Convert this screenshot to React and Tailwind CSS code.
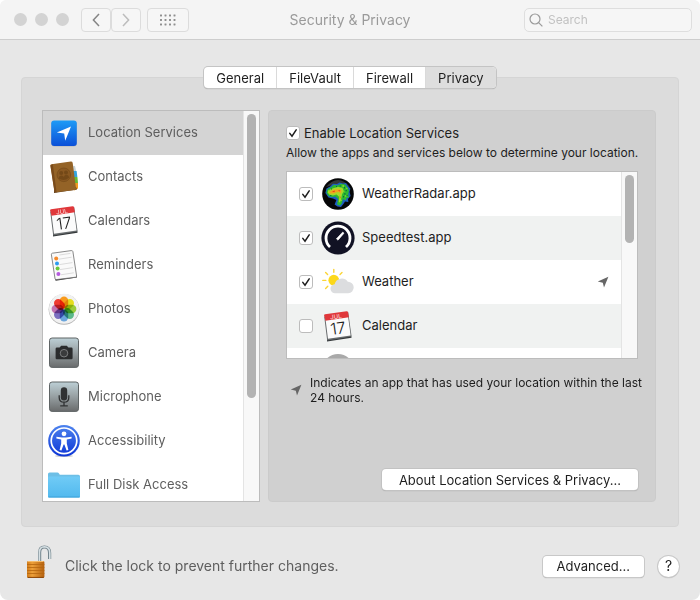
import React, { useState } from "react";

function LocationIcon() {
    return (
        <svg viewBox="0 0 32 32" className="size-8">
            <defs>
                <linearGradient id="loc" x1="0" y1="0" x2="0" y2="1">
                    <stop offset="0" stopColor="#1d9bf6" />
                    <stop offset="1" stopColor="#0b50d8" />
                </linearGradient>
            </defs>
            <rect x="3.4" y="4.2" width="25.4" height="25.4" rx="3" fill="#0002" />
            <rect x="3.2" y="3.5" width="25.6" height="25.4" rx="3" fill="url(#loc)" />
            <path d="M23 9.4 L17.2 23.8 L16.2 16.4 L8.8 15.6 Z" fill="#fff" />
        </svg>
    );
}

function ContactsIcon() {
    return (
        <svg viewBox="0 0 32 32" className="size-8">
            <path d="M23 4.5 L27 5 L28.2 10 L24 12 Z" fill="#c9d3d6" />
            <path d="M24 10 L28.6 10 L29.4 16 L25 17 Z" fill="#35a3dd" />
            <path d="M25 16 L29.4 16 L30 22 L26 23 Z" fill="#67b936" />
            <path d="M26 22 L30 22 L30 27.4 L26 29.5 Z" fill="#f09a21" />
            <path d="M6 32 L29 28.6 L28 26 L6 29 Z" fill="#5b3a17" />
            <path
                d="M2.4 4.4 Q2.3 3.5 3.4 3.3 L22.8 .6 Q24.4 .5 24.7 1.9 L28 27.4 Q28 28.7 27 28.9 L8.2 31.3 Q6.6 31.4 6.4 30.2 Z"
                fill="#946327"
            />
            <path d="M2.4 4.4 L4.8 3.2 L8.6 31.2 Q6.6 31.4 6.4 30.2 Z" fill="#7a4b1b" />
            <circle cx="15.8" cy="13.8" r="6.8" fill="#8a5922" stroke="#764a18" strokeWidth=".7" />
            <g fill="#744918">
                <circle cx="13.2" cy="12" r="2" />
                <circle cx="18" cy="11.4" r="2" />
                <path d="M10.5 17.6 Q11 14.4 13.6 14.4 Q15.4 14.4 15.8 16 Q16.4 13.8 18.6 13.8 Q20.8 14 21.2 16.4 Q16.4 20.8 10.5 17.6Z" />
            </g>
        </svg>
    );
}

function CalendarIcon() {
    return (
        <svg viewBox="0 0 32 32" className="size-8">
            <path d="M5 31.4 L29.6 27.8 L29 25 L5 28.5 Z" fill="#35393b" />
            <path d="M2.2 6.4 L26.2 2.2 L29.6 26.6 L5.2 30.4 Z" fill="#676b6d" />
            <path d="M3.4 8 L25.8 4.4 L28.6 25.4 L6 28.8 Z" fill="#fbfbfb" />
            <path d="M2.2 5.2 Q2.2 4.4 3 4.2 L24.6 1.2 Q25.8 1.2 26 2 L26.9 7.2 L3.4 10.8 Z" fill="#e0383b" />
            <g transform="rotate(-8 16 16)" fontFamily="Inter, sans-serif" textAnchor="middle">
                <text x="15.2" y="8.6" fontSize="6" fill="#ffe1e1">JUL</text>
                <text x="15.6" y="24" fontSize="16" fontWeight="300" fill="#222">17</text>
            </g>
        </svg>
    );
}

function RemindersIcon() {
    return (
        <svg viewBox="0 0 32 32" className="size-8">
            <path d="M7.6 31.7 L29 28.6 L28.6 26.6 L7 29 Z" fill="#333" />
            <path
                d="M3.4 5.6 Q3.3 4.4 4.4 4.2 L23.2 1.6 Q24.6 1.4 24.9 2.6 L28.6 27 Q28.6 28 27.6 28.2 L8.4 30.6 Q7.2 30.6 7 29.6 Z"
                fill="#fafafa"
                stroke="#6b6b6b"
                strokeWidth=".8"
            />
            <g stroke="#cfcfcf" strokeWidth=".7">
                <path d="M11.4 6 L22.4 4.4 M10.8 10.2 L23.6 8.2 M11.4 15.6 L24.4 13.6 M12 20.6 L25 18.6 M12.8 25.8 L25.8 23.8" />
            </g>
            <circle cx="8.2" cy="9.4" r="2" fill="#f58a2c" />
            <circle cx="9" cy="14.6" r="2" fill="#2d9cf0" />
            <circle cx="9.6" cy="19.6" r="2" fill="#6ac83c" />
            <circle cx="10.4" cy="25" r="2" fill="#b75be0" />
        </svg>
    );
}

const petals = ["#f89a1c", "#e5dd1e", "#9bcb3c", "#5cb98a", "#6aa5dc", "#7c6fc0", "#c273b0", "#ee3b30"];

function PhotosIcon() {
    return (
        <svg viewBox="0 0 32 32" className="size-8">
            <circle cx="16" cy="16.3" r="15.4" fill="#b5b5b5" />
            <circle cx="16" cy="15.8" r="15" fill="#f1f1f1" />
            <g style={{ isolation: "isolate" }}>
                {petals.map((color, i) => (
                    <rect
                        key={color}
                        x="11.8"
                        y="3.6"
                        width="8.4"
                        height="12"
                        rx="4.2"
                        fill={color}
                        transform={`rotate(${i * 45} 16 16)`}
                        style={{ mixBlendMode: "multiply" }}
                    />
                ))}
            </g>
        </svg>
    );
}

function MetalPlate({ id, children }) {
    return (
        <svg viewBox="0 0 32 32" className="size-8">
            <defs>
                <linearGradient id={id} x1="0" y1="0" x2="0" y2="1">
                    <stop offset="0" stopColor="#bdd0d6" />
                    <stop offset=".45" stopColor="#9ba4a7" />
                    <stop offset="1" stopColor="#696b6c" />
                </linearGradient>
            </defs>
            <rect x="1.5" y="1" width="29" height="29.4" rx="2.6" fill={`url(#${id})`} stroke="#5f6465" />
            {children}
        </svg>
    );
}

function CameraIcon() {
    return (
        <MetalPlate id="camera">
            <path
                d="M9 10.6 L11.6 10.6 L13.2 8.8 H18.8 L20.4 10.6 H23.4 Q24.6 10.6 24.6 11.8 V21 Q24.6 22.2 23.4 22.2 H8.8 Q7.6 22.2 7.6 21 V11.8 Q7.6 10.6 9 10.6Z"
                fill="#2b2c2d"
            />
            <circle cx="16" cy="16.2" r="3.8" fill="#3a3b3c" stroke="#8b8d8e" strokeWidth=".8" />
        </MetalPlate>
    );
}

function MicrophoneIcon() {
    return (
        <MetalPlate id="mic">
            <rect x="12.8" y="6.2" width="6.4" height="13.2" rx="3.2" fill="#303233" />
            <path
                d="M11.2 14.2 V16.4 Q11.2 21.2 16 21.2 Q20.8 21.2 20.8 16.4 V14.2 M16 21.2 V24.8 M12.2 24.8 H19.8"
                fill="none"
                stroke="#303233"
                strokeWidth="1.3"
            />
        </MetalPlate>
    );
}

function AccessibilityIcon() {
    return (
        <svg viewBox="0 0 32 32" className="size-8">
            <defs>
                <linearGradient id="access" x1="0" y1="0" x2="0" y2="1">
                    <stop offset="0" stopColor="#4d83ee" />
                    <stop offset="1" stopColor="#0d35d6" />
                </linearGradient>
            </defs>
            <ellipse cx="16" cy="31" rx="9" ry="1" fill="#0003" />
            <circle cx="16" cy="15.8" r="15.8" fill="url(#access)" />
            <circle cx="16" cy="15.8" r="12.8" fill="none" stroke="#fff" strokeWidth="1.7" />
            <circle cx="16" cy="8.8" r="2.4" fill="#fff" />
            <path
                d="M8.4 11.8 L14 12.4 H18 L23.6 11.8 V13.4 L18.8 14.6 V18.4 L20.4 25 L18.6 25.4 L16.4 19.4 H15.6 L13.4 25.4 L11.6 25 L13.2 18.4 V14.6 L8.4 13.4 Z"
                fill="#fff"
            />
        </svg>
    );
}

function FolderIcon() {
    return (
        <svg viewBox="0 0 32 32" className="size-8">
            <defs>
                <linearGradient id="folder" x1="0" y1="0" x2="0" y2="1">
                    <stop offset="0" stopColor="#70cbf6" />
                    <stop offset="1" stopColor="#52b9ee" />
                </linearGradient>
            </defs>
            <path d="M0 5 Q0 3.4 1.6 3.4 H9.4 Q10.4 3.4 11 4.4 L11.8 5.8 H30.4 Q32 5.8 32 7.4 V11 H0 Z" fill="#6dbfe6" />
            <rect y="7.4" width="32" height="21.2" rx="1.2" fill="url(#folder)" />
            <path d="M.6 28 H31.4" stroke="#3fa2d8" />
        </svg>
    );
}

function RadarIcon() {
    return (
        <svg viewBox="0 0 32 32" className="size-8">
            <circle cx="16" cy="16" r="15.8" fill="#050607" />
            <path d="M4 9 Q16 -5 28 9 Q16 4 4 9Z" fill="#55595c" opacity=".6" />
            <path
                d="M3.4 15 L4.4 10.6 L8 8.4 L11 5.8 L15 6 L17.6 4.4 L21 5.6 L24 5 L26 8 L28.4 10.6 L27.6 14 L28.6 18 L26 21 L26.4 24 L23 23.6 L21.4 26 L19 29 L15.4 28.4 L12.6 26.4 L14.4 22 L11 20.4 L6.4 19.6 Z"
                fill="#1d5fc0"
            />
            <path
                d="M4.4 14.6 L5.6 11 L9 9.2 L12 6.8 L15.6 7.4 L19 5.8 L23.4 6.4 L25.4 9.6 L27 12.4 L26.2 16.6 L27 19.4 L24.4 20 L24 22.6 L21 21 L19.8 25.4 L18 27.6 L15 26.6 L16.2 21 L13.4 18.6 L9.6 19 L6.6 18 Z"
                fill="#2cba30"
            />
            <path
                d="M5.6 14.4 L8 11.6 L12 10 L16 9 L20.4 9.8 L21.8 13 L20 16.4 L19.4 20 L18 24.6 L16.8 24 L17 18.8 L14.6 16.4 L11 17.4 L7.6 16.8 Z"
                fill="#a9d828"
            />
            <path
                d="M7 14.4 L9.4 12.6 L13.4 11.6 L17.4 11.2 L19.4 12.6 L18.6 15.4 L17 14 L14.4 14.2 L11.6 15.6 L8.6 15.6 Z"
                fill="#f2a21e"
            />
            <path d="M10 13.6 L13 12.6 L12.4 14.2 Z M16 12 L18.4 12.6 L17.6 13.4 Z M17.8 17.4 L18.6 19.4 L17.8 21 Z" fill="#e2401c" />
            <path
                d="M22 9 h1 v1.4 h-1z M23.6 12 h1.2 v1.2 h-1.2z M22.4 15 h1 v1.8 h-1z M14 8 h1 v1 h-1z M21 18 h1 v1.4 h-1z M17.6 7.4 h1.4 v1 h-1.4z M24.6 17 h1 v1 h-1z M9 10.4 h1 v1 h-1z M8 17.2 h1.4 v.8 h-1.4z"
                fill="#0b6a3b"
            />
            <path
                d="M20.4 7.4 h1.6 v1 h-1.6z M24.4 9.8 h1 v1 h-1z M21.6 13.4 h.8 v.8 h-.8z M23.2 17.6 h1 v1 h-1z M18.6 21.8 h1 v1 h-1z M6 12.4 h1 v1 h-1z"
                fill="#d8e82c"
            />
        </svg>
    );
}

function SpeedtestIcon() {
    return (
        <svg viewBox="0 0 34 34" className="size-[34px]">
            <circle cx="17" cy="17" r="16.6" fill="#111224" />
            <path d="M9 26 A12 12 0 1 1 25 26" fill="none" stroke="#fff" strokeWidth="2.8" />
            <path d="M15.4 17.8 L21.8 11 L23 12.2 L17 19.2 Z" fill="#fff" stroke="#fff" strokeWidth=".6" />
        </svg>
    );
}

function WeatherIcon() {
    return (
        <svg viewBox="0 0 32 32" className="size-8">
            <g stroke="#fbd535" strokeWidth="1.4" strokeLinecap="round">
                <path d="M11.8 3.4 V6.2 M3.6 6.4 L5.6 8.4 M.8 14.4 H3.8 M3.6 22.4 L5.8 20.2 M20 6.4 L18 8.4" />
            </g>
            <circle cx="11.8" cy="14.2" r="5.4" fill="#fcd81a" />
            <path
                d="M13.4 27.2 A4.5 4.5 0 0 1 12.6 18.2 A7.3 7.3 0 0 1 25.8 15.8 A5.7 5.7 0 0 1 26.2 27.2 Z"
                fill="#dcdddf"
            />
        </svg>
    );
}

function ArrowMark() {
    return (
        <svg viewBox="0 0 12 12" className="size-3 shrink-0">
            <path d="M11.4 .8 L7 11.6 L5.8 6.8 L.8 5.6 Z" fill="#666" />
        </svg>
    );
}

function LockIcon() {
    return (
        <svg viewBox="0 0 28 36" className="h-9 w-7 shrink-0">
            <defs>
                <linearGradient id="brass" x1="0" y1="0" x2="1" y2="0">
                    <stop offset="0" stopColor="#d07a18" />
                    <stop offset=".3" stopColor="#eda03a" />
                    <stop offset="1" stopColor="#b4600f" />
                </linearGradient>
            </defs>
            <path d="M14.6 18 V8.5 Q14.6 3 19.4 3 Q24.6 3 24.6 9 V15" fill="none" stroke="#74858d" strokeWidth="3.2" />
            <path d="M14.4 18 V8.5 Q14.6 2.8 19.4 2.8 Q24.8 3 24.8 9 V15" fill="none" stroke="#d5dfe3" strokeWidth="1.6" />
            <rect x="2" y="17" width="17.4" height="17" rx="1.4" fill="url(#brass)" />
            <path d="M2 20.5 H19.4 M2 23.5 H19.4 M2 26.5 H19.4 M2 29.5 H19.4" stroke="#b5660f" strokeWidth=".8" />
            <path d="M2.6 33.4 H18.8" stroke="#8a4508" />
            <path d="M3 17.5 H18.6" stroke="#f6bb68" />
        </svg>
    );
}

const categories = [
    { name: "Location Services", icon: <LocationIcon /> },
    { name: "Contacts", icon: <ContactsIcon /> },
    { name: "Calendars", icon: <CalendarIcon /> },
    { name: "Reminders", icon: <RemindersIcon /> },
    { name: "Photos", icon: <PhotosIcon /> },
    { name: "Camera", icon: <CameraIcon /> },
    { name: "Microphone", icon: <MicrophoneIcon /> },
    { name: "Accessibility", icon: <AccessibilityIcon /> },
    { name: "Full Disk Access", icon: <FolderIcon /> },
];

const apps = [
    { name: "WeatherRadar.app", icon: <RadarIcon />, allowed: true },
    { name: "Speedtest.app", icon: <SpeedtestIcon />, allowed: true },
    { name: "Weather", icon: <WeatherIcon />, allowed: true, recent: true },
    { name: "Calendar", icon: <CalendarIcon />, allowed: false },
];

const tabs = ["General", "FileVault", "Firewall", "Privacy"];

function Checkbox({ id, defaultChecked }) {
    return (
        <span className="relative size-[14px] shrink-0">
            <input
                id={id}
                type="checkbox"
                defaultChecked={defaultChecked}
                className="peer block size-[14px] appearance-none rounded-[3px] border border-[#bcbcbc] bg-white"
            />
            <svg
                viewBox="0 0 14 14"
                className="pointer-events-none absolute inset-0 hidden size-[14px] peer-checked:block"
            >
                <path d="M3.8 7.4 L6 10.2 L10.2 3.8" fill="none" stroke="#1c1c1c" strokeWidth="1.5" strokeLinecap="round" />
            </svg>
        </span>
    );
}

function ScrollTrack({ children }) {
    return (
        <div className="w-4 shrink-0 border-l border-[#e4e4e4] bg-[#f8f8f8] px-[3px] pt-[3px]">
            {children}
        </div>
    );
}

function TitleBar() {
    return (
        <header className="flex h-10 items-center rounded-t-md border-b border-[#cdcdcd] bg-[#f4f4f4] px-2">
            <div className="flex flex-1 items-center">
                <div className="ml-[6px] flex gap-2">
                    <span className="size-[13px] rounded-full bg-[#d3d3d3]" />
                    <span className="size-[13px] rounded-full bg-[#d3d3d3]" />
                    <span className="size-[13px] rounded-full bg-[#d3d3d3]" />
                </div>
                <nav className="ml-3 flex">
                    <button
                        aria-label="Back"
                        className="flex h-6 w-[30px] items-center justify-center rounded-[4px] border border-[#dcdcdc] bg-[#f6f6f6]"
                    >
                        <svg viewBox="0 0 8 14" className="h-[14px] w-2">
                            <path d="M7 1 L1.4 7 L7 13" fill="none" stroke="#858585" strokeWidth="1.5" />
                        </svg>
                    </button>
                    <button
                        aria-label="Forward"
                        className="flex h-6 w-[30px] items-center justify-center rounded-[4px] border border-[#dcdcdc] bg-[#f6f6f6]"
                    >
                        <svg viewBox="0 0 8 14" className="h-[14px] w-2">
                            <path d="M1 1 L6.6 7 L1 13" fill="none" stroke="#bdbdbd" strokeWidth="1.5" />
                        </svg>
                    </button>
                </nav>
                <button
                    aria-label="Show All"
                    className="ml-[6px] flex h-6 w-[42px] items-center justify-center rounded-[4px] border border-[#dcdcdc] bg-[#f6f6f6]"
                >
                    <svg viewBox="0 0 16 12" className="h-3 w-4" fill="#8f8f8f">
                        {[0, 1, 2].map((row) =>
                            [0, 1, 2, 3].map((col) => (
                                <rect key={`${row}-${col}`} x={col * 4.5} y={row * 4.5 + 0.4} width="2" height="2" rx=".4" />
                            ))
                        )}
                    </svg>
                </button>
            </div>
            <h1 className="text-sm text-[#9a9a9a]">Security &amp; Privacy</h1>
            <div className="flex flex-1 justify-end">
                <label className="flex h-6 w-[168px] items-center gap-[5px] rounded-[5px] border border-[#dedede] bg-[#f6f6f6] pl-1">
                    <svg viewBox="0 0 14 14" className="size-[14px] shrink-0" fill="none" stroke="#9a9a9a" strokeWidth="1.2">
                        <circle cx="6" cy="6" r="5" />
                        <path d="M9.6 9.6 L13.4 13.4" />
                    </svg>
                    <input
                        type="search"
                        aria-label="Search"
                        placeholder="Search"
                        className="w-full min-w-0 text-xs outline-none placeholder:text-[#c2c2c2]"
                    />
                </label>
            </div>
        </header>
    );
}

function CategoryList() {
    const [selected, setSelected] = useState("Location Services");

    return (
        <div className="flex h-[392px] w-[218px] shrink-0 border border-[#bcbcbc] bg-white">
            <ul className="flex-1 overflow-hidden">
                {categories.map((item) => (
                    <li key={item.name}>
                        <button
                            onClick={() => setSelected(item.name)}
                            className={
                                item.name === selected
                                    ? "flex h-11 w-full items-center gap-2 bg-[#d4d4d4] pl-[5px]"
                                    : "flex h-11 w-full items-center gap-2 pl-[5px]"
                            }
                        >
                            {item.icon}
                            <span className="text-[13px] text-[#5e5e5e]">{item.name}</span>
                        </button>
                    </li>
                ))}
            </ul>
            <ScrollTrack>
                <div className="h-[284px] rounded-full bg-[#b3b3b3]" />
            </ScrollTrack>
        </div>
    );
}

function LocationPane() {
    return (
        <section className="flex flex-1 flex-col rounded-[4px] border border-[#cbcbcb] bg-[#d0d0d0] px-[17px] pt-3 pb-[11px]">
            <div className="flex items-center gap-1">
                <Checkbox id="enable" defaultChecked />
                <label htmlFor="enable" className="text-[13px]/[20px] text-[#1e1e1e]">
                    Enable Location Services
                </label>
            </div>
            <p className="-mr-3 text-xs/[20px] text-[#1e1e1e]">
                Allow the apps and services below to determine your location.
            </p>

            <div className="mt-2 flex h-[188px] border border-[#bcbcbc] bg-white">
                <ul className="flex-1 overflow-hidden">
                    {apps.map((app) => (
                        <li key={app.name} className="flex h-11 items-center px-3 even:bg-[#f0f2f1]">
                            <Checkbox id={app.name} defaultChecked={app.allowed} />
                            <span className="ml-2 flex w-[34px] shrink-0 justify-center">{app.icon}</span>
                            <label htmlFor={app.name} className="ml-[7px] flex-1 text-[13px] text-[#1e1e1e]">
                                {app.name}
                            </label>
                            {app.recent && <ArrowMark />}
                        </li>
                    ))}
                    <li className="flex h-11 items-center pl-[35px]">
                        <span className="size-8 rounded-full bg-[#a9a9a9]" />
                    </li>
                </ul>
                <ScrollTrack>
                    <div className="h-[68px] rounded-full bg-[#b3b3b3]" />
                </ScrollTrack>
            </div>

            <div className="mt-4 -mr-3 flex items-center gap-2 pl-1">
                <ArrowMark />
                <p className="text-xs/[15px] text-[#1e1e1e]">
                    Indicates an app that has used your location within the last 24 hours.
                </p>
            </div>

            <button className="mt-auto h-[21px] self-end rounded-[4px] bg-white px-[17px] text-[13px]/[20px] text-[#1e1e1e] shadow-[0_0_0_1px_#c2c2c2,0_1px_1px_#999]">
                About Location Services &amp; Privacy...
            </button>
        </section>
    );
}

export default function App() {
    const [tab, setTab] = useState("Privacy");

    return (
        <div className="flex min-h-screen flex-col rounded-lg bg-[#e7e7e7] font-['Inter',sans-serif]">
            <TitleBar />

            <main className="px-[21px] pt-[27px]">
                <div className="relative z-10 flex justify-center">
                    <div
                        role="tablist"
                        className="flex h-[21px] divide-x divide-[#dadada] overflow-hidden rounded-[4px] bg-white shadow-[0_0_0_1px_#c4c4c4,0_1px_1px_#999]"
                    >
                        {tabs.map((name) => (
                            <button
                                key={name}
                                role="tab"
                                aria-selected={name === tab}
                                onClick={() => setTab(name)}
                                className="px-3 text-[13px]/[20px] text-[#1e1e1e] aria-selected:bg-[#dedede]"
                            >
                                {name}
                            </button>
                        ))}
                    </div>
                </div>

                <div className="-mt-[11px] flex gap-2 rounded-[4px] border border-[#d5d5d5] bg-[#dcdcdc] pt-8 pr-[22px] pb-6 pl-5">
                    <CategoryList />
                    <LocationPane />
                </div>
            </main>

            <footer className="mt-[17px] flex items-center pr-[21px] pl-[25px]">
                <div className="shrink-0 pb-2">
                    <LockIcon />
                </div>
                <p className="ml-3 flex-1 text-sm text-[#5e5e5e]">
                    Click the lock to prevent further changes.
                </p>
                <button className="h-[21px] rounded-[4px] bg-white px-[14px] text-[13px]/[20px] text-[#1e1e1e] shadow-[0_0_0_1px_#c8c8c8,0_1px_1px_#999]">
                    Advanced...
                </button>
                <button
                    aria-label="Help"
                    className="ml-[14px] size-[21px] rounded-full bg-white text-sm/[20px] text-[#1e1e1e] shadow-[0_0_0_1px_#c8c8c8,0_1px_1px_#999]"
                >
                    ?
                </button>
            </footer>
        </div>
    );
}
